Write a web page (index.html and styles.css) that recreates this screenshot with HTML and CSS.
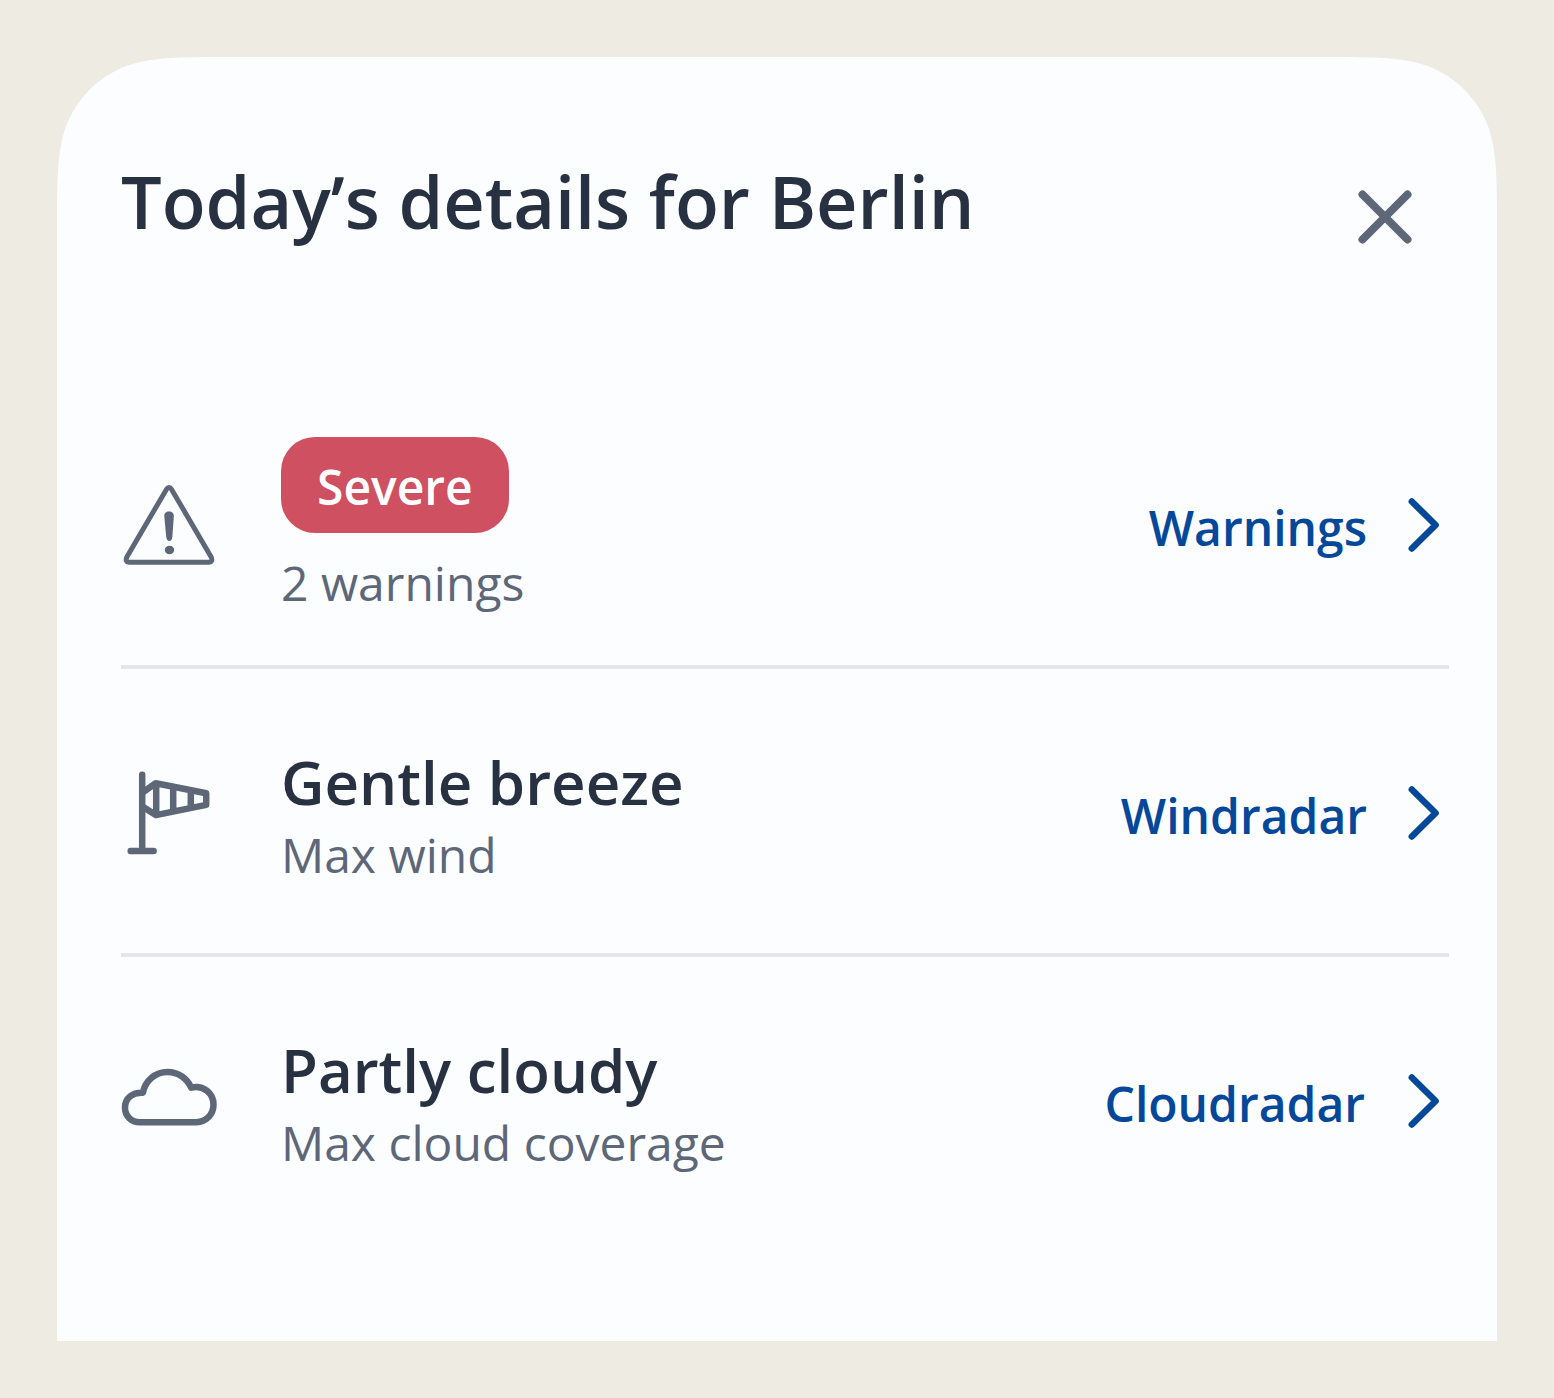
FILE: index.html
```html
<!DOCTYPE html>
<html lang="en">
<head>
    <meta charset="UTF-8">
    <meta name="viewport" content="width=device-width, initial-scale=1.0">
    <title>Today’s details</title>
    <link rel="stylesheet" href="styles.css">
</head>
<body>
    <div class="sheet">
        <div class="head">
            <h1>Today’s details for Berlin</h1>
            <button class="close" aria-label="Close">
                <svg width="96" height="96" viewBox="0 0 96 96"><path d="M25.500 25.500L70.500 70.500M70.500 25.500L25.500 70.500"/></svg>
            </button>
        </div>
        <ul class="list">
            <li>
                <svg class="icon" width="96" height="96" viewBox="0 0 96 96">
                    <path class="thin" d="M45.400 12.400Q48 8.500 50.600 12.400L90.300 80.300Q92 84.900 88 85.200H8Q4 84.900 5.700 80.300Z"/>
                    <path class="fill" d="M48 34.500C51 34.500 53 36 52.800 39.500L51.400 59.500Q50.900 64 48.300 64Q45.700 64 45.200 59.500L43.300 39.500C43 36 45 34.500 48 34.500Z"/>
                    <ellipse class="fill" cx="48.500" cy="73" rx="4.700" ry="4.200"/>
                </svg>
                <div class="info">
                    <span class="badge">Severe</span>
                    <p class="sub">2 warnings</p>
                </div>
                <a class="link" href="#">Warnings</a>
                <svg class="arrow" width="48" height="96" viewBox="0 0 48 96"><path d="M10.800 24.500L34.600 48L10.800 71.500"/></svg>
            </li>
            <li>
                <svg class="icon" width="96" height="96" viewBox="0 0 96 96">
                    <path d="M21.200 9.700V85.500M9.700 85.900H32.600"/>
                    <path d="M23 26.500L34.800 18.200L85.200 28.300V39.900L34.800 50.100L23 42.500M35.200 19V50M52.200 22V46M69.800 26V42.500"/>
                </svg>
                <div class="info">
                    <h2>Gentle breeze</h2>
                    <p class="sub">Max wind</p>
                </div>
                <a class="link" href="#">Windradar</a>
                <svg class="arrow" width="48" height="96" viewBox="0 0 48 96"><path d="M10.800 24.500L34.600 48L10.800 71.500"/></svg>
            </li>
            <li>
                <svg class="icon" width="96" height="96" viewBox="0 0 96 96">
                    <path d="M18.500 69.200H75.500C85 69.200 92.500 61.500 92.500 51.500C92.500 40 82 31.500 70.200 34.600C66 25 57 19 46.500 19C34 19 24 28 21.900 39.800C12 39 4 45 4 54.700C4 63 10.500 69.200 18.500 69.200Z"/>
                </svg>
                <div class="info">
                    <h2>Partly cloudy</h2>
                    <p class="sub">Max cloud coverage</p>
                </div>
                <a class="link cloud" href="#">Cloudradar</a>
                <svg class="arrow" width="48" height="96" viewBox="0 0 48 96"><path d="M10.800 24.500L34.600 48L10.800 71.500"/></svg>
            </li>
        </ul>
    </div>
</body>
</html>
```
FILE: styles.css
```css
* {
    margin: 0;
    padding: 0;
    box-sizing: border-box;
}

body {
    padding: 57px;
    background: #eeebe3;
    font-family: "Open Sans", sans-serif;
    color: #283141;
}

li {
    list-style: none;
}

svg {
    display: block;
    flex: none;
    fill: none;
    stroke: #5d6778;
    stroke-width: 6.5;
    stroke-linecap: round;
    stroke-linejoin: round;
}

.sheet {
    width: 1440px;
    height: 1284px;
    padding: 96px 48px 0 64px;
    background: #fbfdff;
    /* rounded top corners with a smooth start */
    clip-path: path("M0 1284V171.200C0 121.900 0 97.300 8.400 70.700C18.900 41.800 41.800 18.900 70.700 8.400C97.300 0 121.900 0 171.200 0H1268.800C1318.100 0 1342.700 0 1369.300 8.400C1398.200 18.900 1421.100 41.800 1431.600 70.700C1440 97.300 1440 121.900 1440 171.200V1284Z");
}

.head {
    display: flex;
    justify-content: space-between;
    height: 228px;
    padding-right: 16px;
}

.head h1 {
    font-size: 72px;
    font-weight: 600;
    line-height: 96px;
}

.close {
    height: 96px;
    margin-top: 16px;
    border: 0;
    background: none;
}

.close svg {
    stroke-width: 8;
}

.list li {
    display: flex;
    align-items: center;
    height: 288px;
    padding-top: 4px;
    border-bottom: 4px solid #e3e6ed;
}

.list li:last-child {
    border-color: transparent;
}

.icon .thin {
    stroke-width: 5;
}

.icon .fill {
    fill: #5d6778;
    stroke: none;
}

.info {
    flex: 1;
    margin-left: 64px;
    padding-top: 2px;
}

.badge {
    display: block;
    width: fit-content;
    height: 96px;
    margin-bottom: 18px;
    padding: 0 36px;
    border-radius: 34px;
    background: #cf5060;
    color: #fff;
    font-size: 48px;
    font-weight: 600;
    line-height: 100px;
}

.info h2 {
    padding-top: 1px;
    margin-bottom: 1px;
    font-size: 60px;
    font-weight: 600;
    line-height: 80px;
}

.sub {
    font-size: 48px;
    line-height: 64px;
    color: #5d6778;
}

.link {
    margin-right: 34px;
    padding-top: 4px;
    font-size: 48px;
    font-weight: 600;
    color: #05489a;
    text-decoration: none;
}

.link.cloud {
    margin-right: 36px;
}

.arrow {
    stroke: #05489a;
}
```
